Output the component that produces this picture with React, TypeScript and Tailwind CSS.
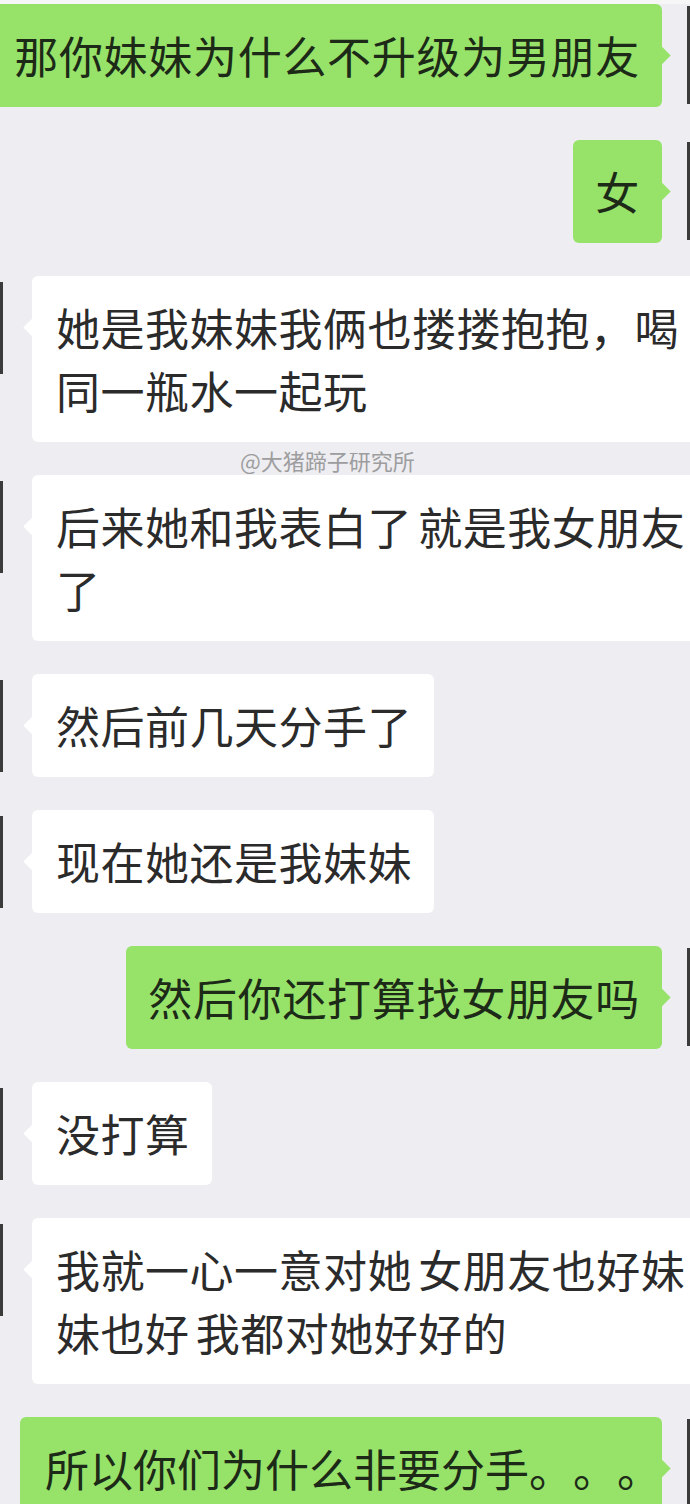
import React from 'react';

type Msg = { side: 'left' | 'right'; text: string; pad?: string };

const messages: Msg[] = [
  { side: 'right', text: '那你妹妹为什么不升级为男朋友' },
  { side: 'right', text: '女' },
  { side: 'left', text: '她是我妹妹我俩也搂搂抱抱，喝同一瓶水一起玩' },
  { side: 'left', text: '后来她和我表白了 就是我女朋友了' },
  { side: 'left', text: '然后前几天分手了' },
  { side: 'left', text: '现在她还是我妹妹' },
  { side: 'right', text: '然后你还打算找女朋友吗' },
  { side: 'left', text: '没打算' },
  { side: 'left', text: '我就一心一意对她 女朋友也好妹妹也好 我都对她好好的' },
  // 마지막 말풍선: 。。。 이 전각이라 오른쪽 여백이 거의 없음
  { side: 'right', text: '所以你们为什么非要分手。。。', pad: 'pl-[25px] pr-[1px] tracking-normal [text-spacing-trim:space-all]' },
];

function LeftRow({ text }: { text: string }) {
  return (
    <div className="flex items-start">
      {/* 잘린 아바타 */}
      <div className="mt-[6px] h-[92px] w-[3px] shrink-0 bg-[#3b3b3b]" />
      <div className="relative ml-[29px] shrink-0 rounded-[6px] bg-white py-[20px] pl-[24px] pr-[22px]">
        <span className="absolute left-[-6px] top-[45px] h-[13px] w-[13px] rotate-45 bg-white" />
        <p className="relative max-w-[632px] text-[44px] leading-[63px] tracking-[0.5px] text-[#2b2b2b] [word-spacing:-4px]">
          {text}
        </p>
      </div>
    </div>
  );
}

function RightRow({ text, pad }: { text: string; pad?: string }) {
  return (
    <div className="flex items-start justify-end">
      <div
        className={`relative mr-[25px] shrink-0 rounded-[6px] bg-[#97e36a] py-[20px] tracking-[0.7px] ${
          pad ?? 'px-[22px]'
        }`}
      >
        <span className="absolute right-[-6px] top-[45px] h-[13px] w-[13px] rotate-45 bg-[#97e36a]" />
        <p className="relative whitespace-nowrap text-[44px] leading-[63px] text-[#1c2a17]">
          {text}
        </p>
      </div>
      <div className="mt-[2px] h-[98px] w-[3px] shrink-0 bg-[#3b3b3b]" />
    </div>
  );
}

export default function App() {
  return (
    <div className="relative h-[1504px] w-[690px] overflow-hidden bg-[#eeedf1] font-['Noto_Sans_CJK_SC','Noto_Sans',sans-serif]">
      <div className="h-[4px] bg-[#f6f6f7]" />
      <div className="flex flex-col gap-[33px]">
        {messages.map((m, i) =>
          m.side === 'left' ? (
            <LeftRow key={i} text={m.text} />
          ) : (
            <RightRow key={i} text={m.text} pad={m.pad} />
          )
        )}
      </div>

      {/* 워터마크 */}
      <div className="absolute left-[240px] top-[446px] text-[22px] leading-[28px] text-[#9d9d9f]">
        @大猪蹄子研究所
      </div>
    </div>
  );
}
